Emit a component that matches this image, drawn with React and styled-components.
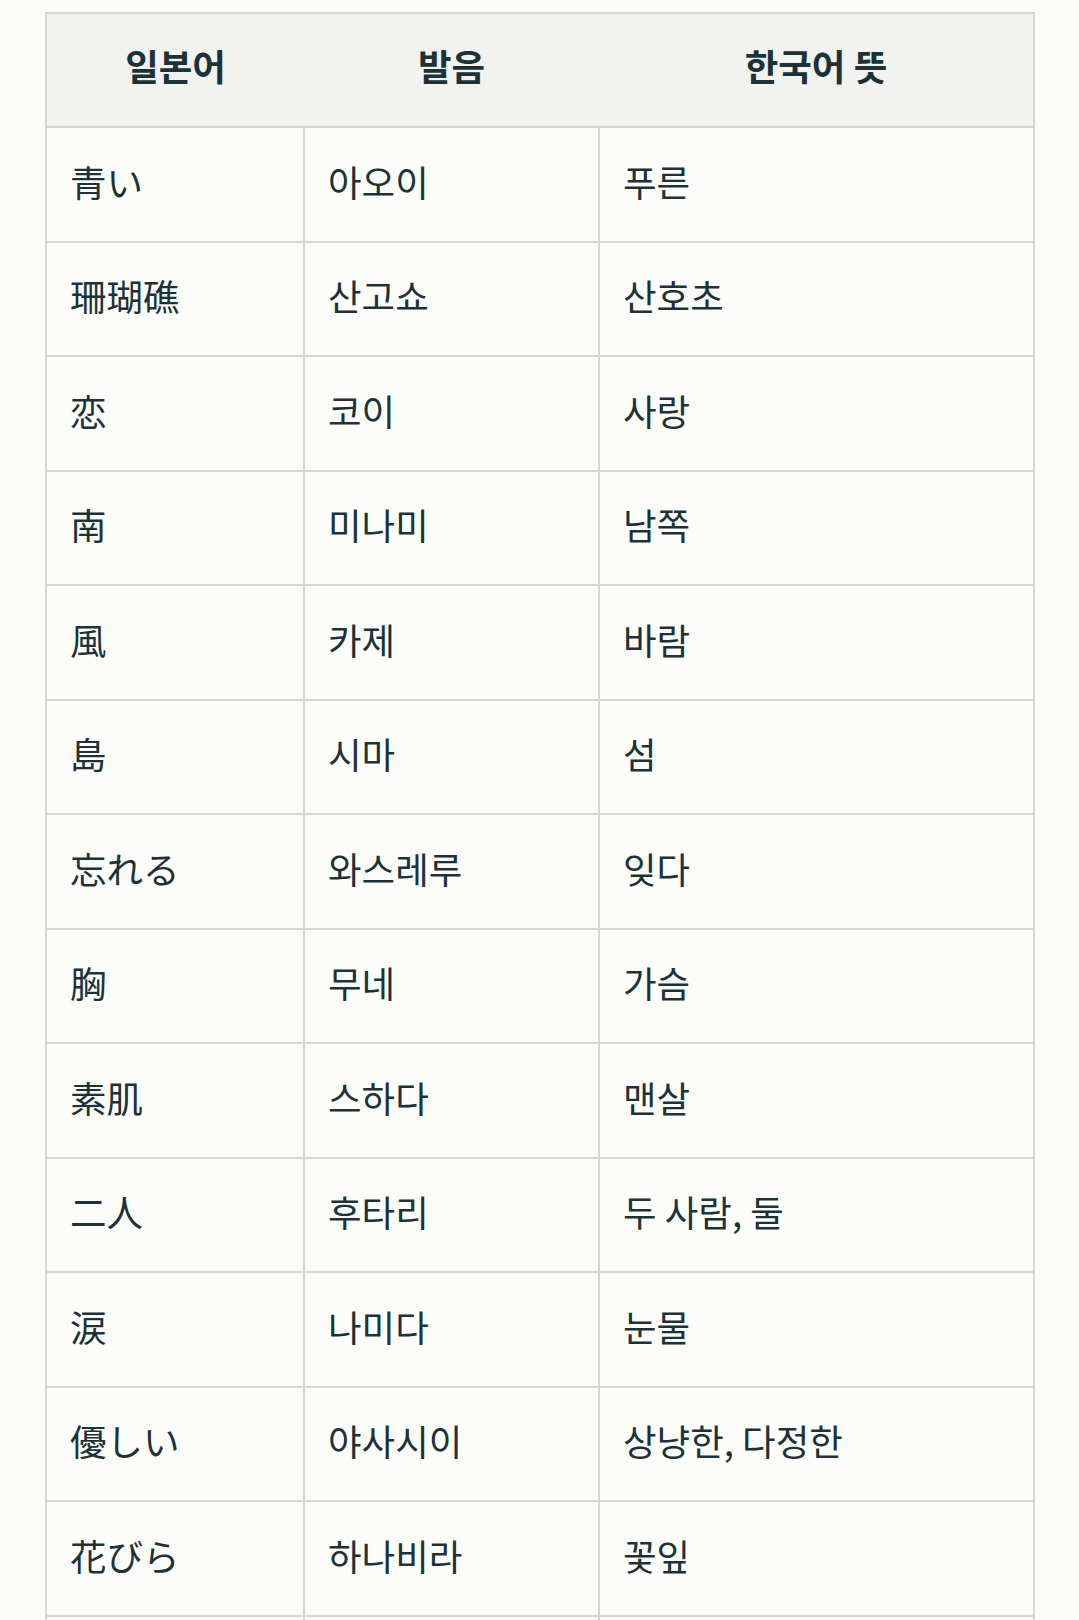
import React from "react";
import styled, { createGlobalStyle } from "styled-components";

const GlobalStyle = createGlobalStyle`
    html, body {
        margin: 0;
        padding: 0;
        background: #fcfdf9;
    }
    body {
        font-family: "Noto Sans CJK KR", "Noto Sans", sans-serif;
        color: #1b3238;
    }
`;

const Page = styled.div`
    padding: 12px 44px 0 45px;
`;

const Table = styled.table`
    width: 100%;
    border-collapse: collapse;
    table-layout: fixed;
    border: 2px solid #d6d7d1;
`;

const Col = styled.col`
    width: ${p => p.$w}px;
`;

const HeadCell = styled.th`
    background: #f2f3ef;
    border-top: 2px solid #d6d7d1;
    border-bottom: 2px solid #d6d7d1;
    height: 104px;
    padding: 0 23px 8px;
    font-size: 36.5px;
    font-weight: 700;
    text-align: center;
    vertical-align: middle;
    line-height: 1.4;
`;

const Cell = styled.td`
    border: 2px solid #d6d7d1;
    height: 106.5px;
    padding: 0 23px 6px;
    font-size: 36.5px;
    font-weight: 400;
    vertical-align: middle;
    line-height: 1.4;
    font-family: ${p =>
        p.$jp
            ? '"Noto Sans CJK JP", "Noto Sans CJK KR", sans-serif'
            : '"Noto Sans CJK KR", "Noto Sans", sans-serif'};
`;

const words = [
    ["青い", "아오이", "푸른"],
    ["珊瑚礁", "산고쇼", "산호초"],
    ["恋", "코이", "사랑"],
    ["南", "미나미", "남쪽"],
    ["風", "카제", "바람"],
    ["島", "시마", "섬"],
    ["忘れる", "와스레루", "잊다"],
    ["胸", "무네", "가슴"],
    ["素肌", "스하다", "맨살"],
    ["二人", "후타리", "두 사람, 둘"],
    ["涙", "나미다", "눈물"],
    ["優しい", "야사시이", "상냥한, 다정한"],
    ["花びら", "하나비라", "꽃잎"],
    ["夢", "유메", "꿈"]
];

export default function App() {
    return (
        <Page>
            <GlobalStyle />
            <Table>
                <colgroup>
                    <Col $w={258} />
                    <Col $w={295} />
                    <Col $w={435} />
                </colgroup>
                <thead>
                    <tr>
                        <HeadCell>일본어</HeadCell>
                        <HeadCell>발음</HeadCell>
                        <HeadCell>한국어 뜻</HeadCell>
                    </tr>
                </thead>
                <tbody>
                    {words.map(([jp, reading, meaning]) => (
                        <tr key={jp}>
                            <Cell $jp>{jp}</Cell>
                            <Cell>{reading}</Cell>
                            <Cell>{meaning}</Cell>
                        </tr>
                    ))}
                </tbody>
            </Table>
        </Page>
    );
}
